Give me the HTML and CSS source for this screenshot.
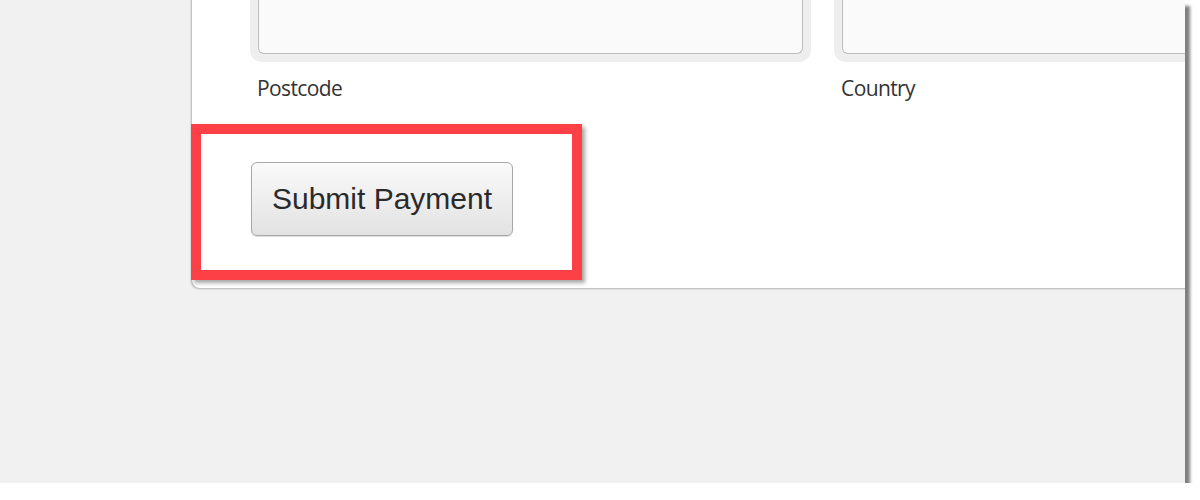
FILE: index.html
```html
<!DOCTYPE html>
<html lang="en">
<head>
  <meta charset="UTF-8">
  <title>Submit Payment</title>
  <link rel="stylesheet" href="styles.css">
</head>
<body>
  <div class="shot">
    <div class="card">
      <!-- Address fields, top part cut off -->
      <div class="fields">
        <div class="field">
          <div class="ring"><div class="input"></div></div>
          <label class="label">Postcode</label>
        </div>
        <div class="field">
          <div class="ring"><div class="input"></div></div>
          <label class="label">Country</label>
        </div>
      </div>

      <div class="actions">
        <button class="submit">Submit Payment</button>
      </div>
    </div>

    <!-- Highlight annotation -->
    <div class="highlight"></div>
  </div>
</body>
</html>
```

FILE: styles.css
```css
body {
  margin: 0;
  background-color: #ffffff;
  font-family: "Open Sans", sans-serif;
}

.shot {
  position: relative;
  width: 1185px;
  height: 483px;
  overflow: hidden;
  background-color: #f1f1f1;
  box-shadow: 5px 6px 3px rgba(0, 0, 0, 0.5);
}

.card {
  margin-left: 192px;
  margin-top: -30px;
  width: 1100px;
  height: 318px;
  background-color: #ffffff;
  border-bottom-left-radius: 8px;
  box-shadow: -1px 1px 2px rgba(0, 0, 0, 0.25);
  padding-left: 58px;
  box-sizing: border-box;
}

.fields {
  display: flex;
  gap: 23px;
}

.field {
  width: 561px;
  flex-shrink: 0;
}

.ring {
  height: 92px;
  padding: 0 8px 8px 8px;
  background-color: #eeeeee;
  border-radius: 0 0 12px 12px;
  box-sizing: border-box;
}

.input {
  height: 100%;
  background-color: #fafafa;
  border: 1px solid #bdbdbd;
  border-top: none;
  border-radius: 0 0 6px 6px;
  box-sizing: border-box;
}

.label {
  display: block;
  margin-top: 12px;
  padding-left: 7px;
  font-size: 21px;
  line-height: 28px;
  color: #333333;
  letter-spacing: -0.6px;
}

.actions {
  margin-top: 60px;
}

.submit {
  width: 262px;
  height: 74px;
  margin-left: 1px;
  padding: 0;
  font-family: "Liberation Sans", Arial, sans-serif;
  font-size: 30px;
  color: #2a2a2a;
  background: linear-gradient(#fafafa, #e2e2e2);
  border: 1px solid #a8a8a8;
  border-radius: 6px;
  box-shadow: 0 1px 1px rgba(0, 0, 0, 0.15);
}

.highlight {
  position: absolute;
  left: 191px;
  top: 124px;
  width: 391px;
  height: 156px;
  border: 10px solid #fc4045;
  box-sizing: border-box;
  box-shadow: 3px 3px 4px rgba(0, 0, 0, 0.35);
}
```
